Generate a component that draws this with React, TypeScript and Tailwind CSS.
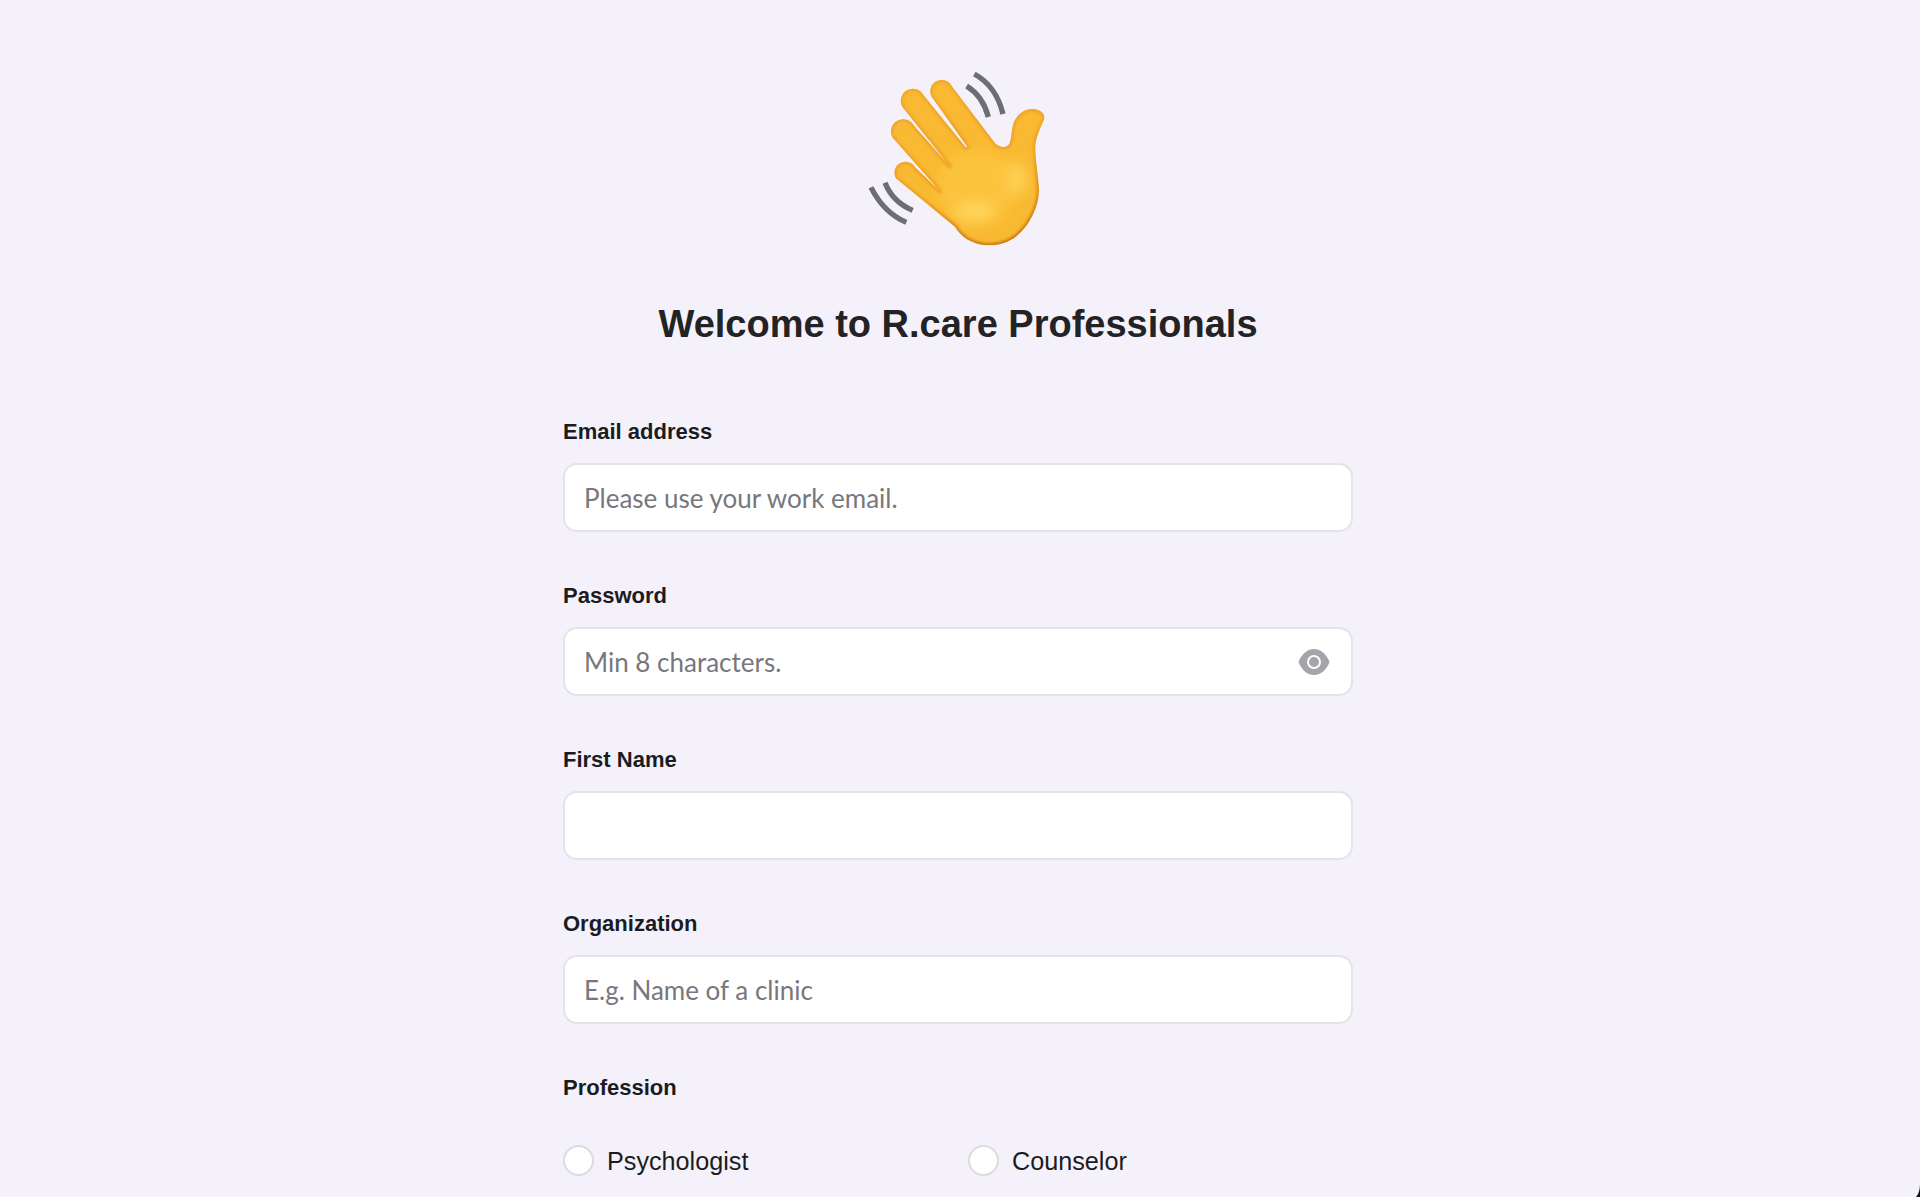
const labelClass = "block text-[22px] leading-[26px] font-bold text-[#1c1c1f] mb-[18px]";
const inputClass =
  "w-full h-[69px] rounded-[14px] border-2 border-[#e4e3e9] bg-white px-[19px] text-[26px] text-[#1c1c1f] placeholder:text-[#77777d] font-['Lato','Noto_Sans',sans-serif] outline-none";

const handPath =
  "M382 290L275 140A33 33 0 0 1 335 108L465 280C478 293 498 296 508 282C514 270 514 250 518 230C523 200 548 177 578 177C600 178 618 192 612 208C605 228 590 250 586 285C584 320 594 370 597 420C596 470 570 525 530 558C490 590 430 595 385 570C365 558 355 545 345 530L168 385A30 30 0 0 1 225 352L303 427L157 262A33 33 0 0 1 222 227L333 353L187 170A33 33 0 0 1 250 135L377 292Z";

function WavingHand() {
  return (
    <svg width="240" height="210" viewBox="0 0 720 630" fill="none">
      <defs>
        <clipPath id="handClip">
          <path d={handPath} />
        </clipPath>
        <linearGradient id="rim" gradientUnits="userSpaceOnUse" x1="300" y1="100" x2="480" y2="590">
          <stop offset="0" stopColor="#eea62c" />
          <stop offset="0.6" stopColor="#eb9d22" />
          <stop offset="1" stopColor="#c56c0c" />
        </linearGradient>
        <filter id="soft" x="-5%" y="-5%" width="110%" height="110%">
          <feGaussianBlur stdDeviation="1.3" />
        </filter>
        <filter id="rimBlur" x="-5%" y="-5%" width="110%" height="110%">
          <feGaussianBlur stdDeviation="5" />
        </filter>
        <filter id="glow" x="-60%" y="-60%" width="220%" height="220%">
          <feGaussianBlur stdDeviation="20" />
        </filter>
      </defs>
      <g stroke="#6d6d72" strokeWidth="16" filter="url(#soft)">
        <path d="M403 72C445 95 475 135 489 192" />
        <path d="M380 108C412 128 434 158 445 201" />
        <path d="M93 412C118 462 152 497 199 517" />
        <path d="M135 398C150 436 178 464 218 481" />
      </g>
      <g filter="url(#soft)">
        <g clipPath="url(#handClip)">
          <rect x="140" y="80" width="490" height="520" fill="#f9b932" />
          <ellipse cx="410" cy="410" rx="120" ry="110" fill="#fcc33e" filter="url(#glow)" />
          <ellipse cx="405" cy="485" rx="60" ry="26" fill="#ffd860" filter="url(#glow)" />
          <ellipse cx="530" cy="385" rx="26" ry="50" fill="#ffd458" filter="url(#glow)" />
          <path d={handPath} stroke="url(#rim)" strokeWidth="12" filter="url(#rimBlur)" />
        </g>
      </g>
    </svg>
  );
}

function EyeIcon() {
  return (
    <svg width="32" height="28" viewBox="0 0 32 28" className="absolute right-[23px] top-[21px]">
      <path d="M0.5 14C4 5 10 1 16 1C22 1 28 5 31.5 14C28 23 22 27 16 27C10 27 4 23 0.5 14Z" fill="#a4a4ab" />
      <circle cx="16" cy="14" r="6" fill="none" stroke="#ffffff" strokeWidth="2" />
    </svg>
  );
}

function Radio({ label }: { label: string }) {
  return (
    <label className="flex items-center gap-[13px]">
      <span className="w-[31px] h-[31px] rounded-full border-2 border-[#dcdbe0] bg-white" />
      <span className="text-[25.2px] leading-[30px] text-[#1c1c1f]">{label}</span>
    </label>
  );
}

export default function App() {
  return (
    <div className="relative h-[1197px] overflow-hidden bg-[#f4f1fb] font-['Liberation_Sans',Arial,sans-serif]">
      <div className="w-[790px] ml-[563px] pt-[50px]">
        <div className="flex justify-center pl-[4px]">
          <WavingHand />
        </div>
        <h1 className="mt-[41px] text-center text-[38px] leading-[46px] font-bold text-[#232326]">
          Welcome to R.care Professionals
        </h1>

        <form className="mt-[72px]">
          <div className="mb-[51px]">
            <label className={labelClass}>Email address</label>
            <input className={inputClass} placeholder="Please use your work email." />
          </div>

          <div className="mb-[51px]">
            <label className={labelClass}>Password</label>
            <div className="relative">
              <input className={inputClass} type="password" placeholder="Min 8 characters." />
              <EyeIcon />
            </div>
          </div>

          <div className="mb-[51px]">
            <label className={labelClass}>First Name</label>
            <input className={inputClass} />
          </div>

          <div className="mb-[51px]">
            <label className={labelClass}>Organization</label>
            <input className={inputClass} placeholder="E.g. Name of a clinic" />
          </div>

          <label className={labelClass}>Profession</label>
          <div className="grid grid-cols-2 gap-[20px] pt-[26px]">
            <Radio label="Psychologist" />
            <Radio label="Counselor" />
          </div>
        </form>
      </div>

      {/* window corner */}
      <svg width="4" height="14" viewBox="0 0 4 14" className="absolute right-0 bottom-0">
        <path d="M4 0C4 6 3 11 0 14H4Z" fill="#111114" />
      </svg>
    </div>
  );
}
